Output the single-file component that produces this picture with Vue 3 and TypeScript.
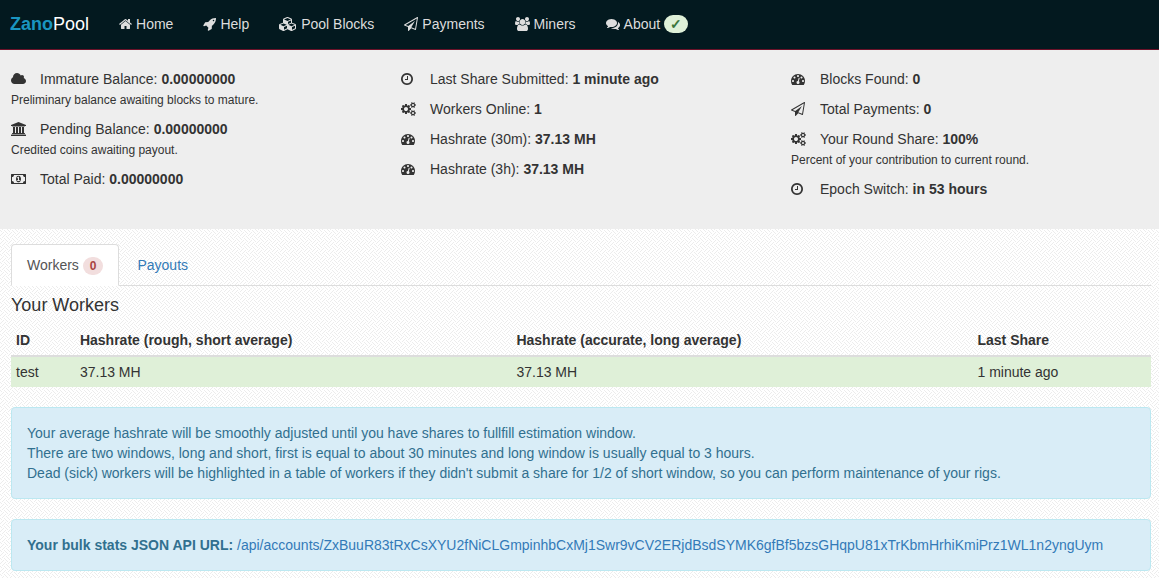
<script setup lang="ts">
interface Glyph {
  w: number
  d: string
}

interface Stat {
  icon: string
  label: string
  value: string
  note?: string
}

// Glyph outlines are drawn y-up on a 1792-unit em, 1536 units above the baseline.
const cog =
  'q0 -16 -149 -31q-12 -27 -30 -52q51 -113 51 -138q0 -4 -4 -7q-122 -71 -124 -71q-8 0 -46 47t-52 68q-20 -2 -30 -2t-30 2q-14 -21 -52 -68t-46 -47q-2 0 -124 71q-4 3 -4 7q0 25 51 138q-18 25 -30 52q-149 15 -149 31v140q0 16 149 31q13 29 30 52q-51 113 -51 138q0 4 4 7q4 2 35 20t59 34t30 16q8 0 46 -46.5t52 -67.5q20 2 30 2t30 -2q51 71 92 112l6 2q4 0 124 -70q4 -3 4 -7q0 -25 -51 -138q17 -23 30 -52q149 -15 149 -31z'
const dot = 'q0 53 -37.5 90.5t-90.5 37.5t-90.5 -37.5t-37.5 -90.5t37.5 -90.5t90.5 -37.5t90.5 37.5t37.5 90.5z'

const icons: Record<string, Glyph> = {
  home: {
    w: 1664,
    d: 'M1408 544v-480q0 -26 -19 -45t-45 -19h-384v384h-256v-384h-384q-26 0 -45 19t-19 45v480q0 1 0.5 3t0.5 3l575 474l575 -474q1 -2 1 -6zM1631 613l-62 -74q-8 -9 -21 -11h-3q-13 0 -21 7l-692 577l-692 -577q-12 -8 -24 -7q-13 2 -21 11l-62 74q-8 10 -7 23.5t11 21.5l719 599q32 26 76 26t76 -26l244 -204v195q0 14 9 23t23 9h192q14 0 23 -9t9 -23v-408l219 -182q10 -8 11 -21.5t-7 -23.5z',
  },
  rocket: {
    w: 1664,
    d: 'M1440 1088q0 40 -28 68t-68 28t-68 -28t-28 -68t28 -68t68 -28t68 28t28 68zM1664 1376q0 -249 -75.5 -430.5t-253.5 -360.5q-81 -80 -195 -176l-20 -379q-2 -16 -16 -26l-384 -224q-7 -4 -16 -4q-12 0 -23 9l-64 64q-13 14 -8 32l85 276l-281 281l-276 -85q-3 -1 -9 -1q-14 0 -23 9l-64 64q-17 19 -5 39l224 384q10 14 26 16l379 20q96 114 176 195q188 187 358 258t431 71q14 0 24 -9.5t10 -22.5z',
  },
  cubes: {
    w: 2304,
    d: 'M640 -96l384 192v314l-384 -164v-342zM576 358l404 173l-404 173l-404 -173zM1664 -96l384 192v314l-384 -164v-342zM1600 358l404 173l-404 173l-404 -173zM1152 651l384 165v266l-384 -164v-267zM1088 1030l441 189l-441 189l-441 -189zM2176 512v-416q0 -36 -19 -67t-52 -47l-448 -224q-25 -14 -57 -14t-57 14l-448 224q-5 2 -7 4q-2 -2 -7 -4l-448 -224q-25 -14 -57 -14t-57 14l-448 224q-33 16 -52 47t-19 67v416q0 38 21.5 70t56.5 48l434 186v400q0 38 21.5 70t56.5 48l448 192q23 10 50 10t50 -10l448 -192q35 -16 56.5 -48t21.5 -70v-400l434 -186q36 -16 57 -48t21 -70z',
  },
  plane: {
    w: 1792,
    d: 'M1764 1525q33 -24 27 -64l-256 -1536q-5 -29 -32 -45q-14 -8 -31 -8q-11 0 -24 5l-527 215l-298 -327q-18 -21 -47 -21q-14 0 -23 4q-19 7 -30 23.5t-11 36.5v452l-472 193q-37 14 -40 55q-3 39 32 59l1664 960q35 21 68 -2zM1422 26l221 1323l-1434 -827l336 -137l863 639l-478 -797z',
  },
  users: {
    w: 1920,
    d: 'M593 640q-162 -5 -265 -128h-134q-82 0 -138 40.5t-56 118.5q0 353 124 353q6 0 43.5 -21t97.5 -42.5t119 -21.5q67 0 133 23q-5 -37 -5 -66q0 -139 81 -256zM1664 3q0 -120 -73 -189.5t-194 -69.5h-874q-121 0 -194 69.5t-73 189.5q0 53 3.5 103.5t14 109t26.5 108.5t43 97.5t62 81t85.5 53.5t111.5 20q10 0 43 -21.5t73 -48t107 -48t135 -21.5t135 21.5t107 48t73 48t43 21.5q61 0 111.5 -20t85.5 -53.5t62 -81t43 -97.5t26.5 -108.5t14 -109t3.5 -103.5zM640 1280q0 -106 -75 -181t-181 -75t-181 75t-75 181t75 181t181 75t181 -75t75 -181zM1344 896q0 -159 -112.5 -271.5t-271.5 -112.5t-271.5 112.5t-112.5 271.5t112.5 271.5t271.5 112.5t271.5 -112.5t112.5 -271.5zM1920 671q0 -78 -56 -118.5t-138 -40.5h-134q-103 123 -265 128q81 117 81 256q0 29 -5 66q66 -23 133 -23q59 0 119 21.5t97.5 42.5t43.5 21q124 0 124 -353zM1792 1280q0 -106 -75 -181t-181 -75t-181 75t-75 181t75 181t181 75t181 -75t75 -181z',
  },
  comments: {
    w: 1792,
    d: 'M1408 768q0 -139 -94 -257t-256.5 -186.5t-353.5 -68.5q-86 0 -176 16q-124 -88 -278 -128q-36 -9 -86 -16h-3q-11 0 -20.5 8t-11.5 21q-1 3 -1 6.5t0.5 6.5t2 6l2.5 5t3.5 5.5t4 5t4.5 5t4 4.5q5 6 23 25t26 29.5t22.5 29t25 38.5t20.5 44q-124 72 -195 177t-71 224q0 139 94 257t256.5 186.5t353.5 68.5t353.5 -68.5t256.5 -186.5t94 -257zM1792 512q0 -120 -71 -224.5t-195 -176.5q10 -24 20.5 -44t25 -38.5t22.5 -29t26 -29.5t23 -25q1 -1 4 -4.5t4.5 -5t4 -5t3.5 -5.5l2.5 -5t2 -6t0.5 -6.5t-1 -6.5q-3 -14 -13 -22t-22 -7q-50 7 -86 16q-154 40 -278 128q-90 -16 -176 -16q-271 0 -472 132q58 -4 88 -4q161 0 309 45t264 129q125 92 192 212t67 254q0 77 -23 152q129 -71 204 -178t75 -230z',
  },
  cloud: {
    w: 1920,
    d: 'M1920 384q0 -159 -112.5 -271.5t-271.5 -112.5h-1088q-185 0 -316.5 131.5t-131.5 316.5q0 132 71 241.5t187 163.5q-2 28 -2 43q0 212 150 362t362 150q158 0 286.5 -88t187.5 -230q70 62 166 62q106 0 181 -75t75 -181q0 -75 -41 -138q129 -30 213 -134.5t84 -239.5z',
  },
  bank: {
    w: 1920,
    d: 'M960 1536l960 -384v-128h-128q0 -26 -20.5 -45t-48.5 -19h-1526q-28 0 -48.5 19t-20.5 45h-128v128zM256 896h256v-768h128v768h256v-768h128v768h256v-768h128v768h256v-768h59q28 0 48.5 -19t20.5 -45v-64h-1664v64q0 26 20.5 45t48.5 19h59v768zM1851 -64q28 0 48.5 -19t20.5 -45v-128h-1920v128q0 26 20.5 45t48.5 19h1782z',
  },
  money: {
    w: 1920,
    d: 'M768 384h384v96h-128v448h-114l-148 -137l77 -80q42 37 55 57h2v-288h-128v-96zM1280 640q0 -70 -21 -142t-59.5 -134t-101.5 -101t-138 -39t-138 39t-101.5 101t-59.5 134t-21 142t21 142t59.5 134t101.5 101t138 39t138 -39t101.5 -101t59.5 -134t21 -142zM1792 384v512q-106 0 -181 75t-75 181h-1152q0 -106 -75 -181t-181 -75v-512q106 0 181 -75t75 -181h1152q0 106 75 181t181 75zM1920 1216v-1152q0 -26 -19 -45t-45 -19h-1792q-26 0 -45 19t-19 45v1152q0 26 19 45t45 19h1792q26 0 45 -19t19 -45z',
  },
  clock: {
    w: 1536,
    d: 'M896 992v-448q0 -14 -9 -23t-23 -9h-320q-14 0 -23 9t-9 23v64q0 14 9 23t23 9h224v352q0 14 9 23t23 9h64q14 0 23 -9t9 -23zM1312 640q0 148 -73 273t-198 198t-273 73t-273 -73t-198 -198t-73 -273t73 -273t198 -198t273 -73t273 73t198 198t73 273zM1536 640q0 -209 -103 -385.5t-279.5 -279.5t-385.5 -103t-385.5 103t-279.5 279.5t-103 385.5t103 385.5t279.5 279.5t385.5 103t385.5 -103t279.5 -279.5t103 -385.5z',
  },
  cogs: {
    w: 1920,
    d:
      'M896 640q0 106 -75 181t-181 75t-181 -75t-75 -181t75 -181t181 -75t181 75t75 181zM1664 128q0 52 -38 90t-90 38t-90 -38t-38 -90q0 -53 37.5 -90.5t90.5 -37.5t90.5 37.5t37.5 90.5zM1664 1152q0 52 -38 90t-90 38t-90 -38t-38 -90q0 -53 37.5 -90.5t90.5 -37.5t90.5 37.5t37.5 90.5zM1280 731v-185q0 -10 -7 -19.5t-16 -10.5l-155 -24q-11 -35 -32 -76q34 -48 90 -115q7 -11 7 -20q0 -12 -7 -19q-23 -30 -82.5 -89.5t-78.5 -59.5q-11 0 -21 7l-115 90q-37 -19 -77 -31q-11 -108 -23 -155q-7 -24 -30 -24h-186q-11 0 -20 7.5t-10 17.5l-23 153q-34 10 -75 31l-118 -89q-7 -7 -20 -7q-11 0 -21 8q-144 133 -144 160q0 9 7 19q10 14 41 53t47 61q-23 44 -35 82l-152 24q-10 1 -17 9.5t-7 19.5v185q0 10 7 19.5t16 10.5l155 24q11 35 32 76q-34 48 -90 115q-7 11 -7 20q0 12 7 20q22 30 82 89t79 59q11 0 21 -7l115 -90q34 18 77 32q11 108 23 154q7 24 30 24h186q11 0 20 -7.5t10 -17.5l23 -153q34 -10 75 -31l118 89q8 7 20 7q11 0 21 -8q144 -133 144 -160q0 -8 -7 -19q-12 -16 -42 -54t-45 -60q23 -48 34 -82l152 -23q10 -2 17 -10.5t7 -19.5zM1920 198v-140' +
      cog +
      'M1920 1222v-140' +
      cog,
  },
  gauge: {
    w: 1792,
    d:
      'M384 384' + dot + 'M576 832' + dot +
      'M1004 351l101 382q6 26 -7.5 48.5t-38.5 29.5t-48 -6.5t-30 -39.5l-101 -382q-60 -5 -107 -43.5t-63 -98.5q-20 -77 20 -146t117 -89t146 20t89 117q16 60 -6 117t-72 91z' +
      'M1664 384' + dot + 'M1024 1024' + dot + 'M1472 832' + dot +
      'M1792 384q0 -261 -141 -483q-19 -29 -54 -29h-1402q-35 0 -54 29q-141 221 -141 483q0 182 71 348t191 286t286 191t348 71t348 -71t286 -191t191 -286t71 -348z',
  },
}

const iconWidth = (name: string): number => Math.round(icons[name].w / 128)

const nav: { icon: string; label: string; badge?: string }[] = [
  { icon: 'home', label: 'Home' },
  { icon: 'rocket', label: 'Help' },
  { icon: 'cubes', label: 'Pool Blocks' },
  { icon: 'plane', label: 'Payments' },
  { icon: 'users', label: 'Miners' },
  { icon: 'comments', label: 'About', badge: '✓' },
]

const stats: Stat[][] = [
  [
    { icon: 'cloud', label: 'Immature Balance:', value: '0.00000000', note: 'Preliminary balance awaiting blocks to mature.' },
    { icon: 'bank', label: 'Pending Balance:', value: '0.00000000', note: 'Credited coins awaiting payout.' },
    { icon: 'money', label: 'Total Paid:', value: '0.00000000' },
  ],
  [
    { icon: 'clock', label: 'Last Share Submitted:', value: '1 minute ago' },
    { icon: 'cogs', label: 'Workers Online:', value: '1' },
    { icon: 'gauge', label: 'Hashrate (30m):', value: '37.13 MH' },
    { icon: 'gauge', label: 'Hashrate (3h):', value: '37.13 MH' },
  ],
  [
    { icon: 'gauge', label: 'Blocks Found:', value: '0' },
    { icon: 'plane', label: 'Total Payments:', value: '0' },
    { icon: 'cogs', label: 'Your Round Share:', value: '100%', note: 'Percent of your contribution to current round.' },
    { icon: 'clock', label: 'Epoch Switch:', value: 'in 53 hours' },
  ],
]

const workers = [{ id: 'test', rough: '37.13 MH', accurate: '37.13 MH', last: '1 minute ago' }]

const apiUrl =
  '/api/accounts/ZxBuuR83tRxCsXYU2fNiCLGmpinhbCxMj1Swr9vCV2ERjdBsdSYMK6gfBf5bzsGHqpU81xTrKbmHrhiKmiPrz1WL1n2yngUym'
</script>

<template>
  <div class="page">
    <header class="navbar">
      <a class="brand" href="#"><b>Zano</b>Pool</a>
      <nav class="links">
        <a v-for="item in nav" :key="item.label" href="#">
          <svg
            class="icon"
            :width="iconWidth(item.icon)"
            height="14"
            :viewBox="`0 0 ${icons[item.icon].w} 1792`"
            aria-hidden="true"
          >
            <path transform="translate(0 1536) scale(1 -1)" :d="icons[item.icon].d" />
          </svg>
          <span>{{ item.label }}</span>
          <span v-if="item.badge" class="badge ok">{{ item.badge }}</span>
        </a>
      </nav>
    </header>

    <section class="stats">
      <div v-for="(column, c) in stats" :key="c" class="column">
        <div v-for="stat in column" :key="stat.label" class="stat">
          <div class="line">
            <span class="slot">
              <svg
                class="icon"
                :width="iconWidth(stat.icon)"
                height="14"
                :viewBox="`0 0 ${icons[stat.icon].w} 1792`"
                aria-hidden="true"
              >
                <path transform="translate(0 1536) scale(1 -1)" :d="icons[stat.icon].d" />
              </svg>
            </span>
            <span>{{ stat.label }} <b>{{ stat.value }}</b></span>
          </div>
          <small v-if="stat.note">{{ stat.note }}</small>
        </div>
      </div>
    </section>

    <main class="content">
      <nav class="tabs">
        <a class="tab active" href="#" aria-current="page">Workers <span class="badge bad">0</span></a>
        <a class="tab" href="#">Payouts</a>
      </nav>

      <h4>Your Workers</h4>
      <table>
        <thead>
          <tr>
            <th>ID</th>
            <th>Hashrate (rough, short average)</th>
            <th>Hashrate (accurate, long average)</th>
            <th>Last Share</th>
          </tr>
        </thead>
        <tbody>
          <tr v-for="w in workers" :key="w.id">
            <td>{{ w.id }}</td>
            <td>{{ w.rough }}</td>
            <td>{{ w.accurate }}</td>
            <td>{{ w.last }}</td>
          </tr>
        </tbody>
      </table>

      <div class="alert">
        Your average hashrate will be smoothly adjusted until you have shares to fullfill estimation window.<br />
        There are two windows, long and short, first is equal to about 30 minutes and long window is usually equal to 3
        hours.<br />
        Dead (sick) workers will be highlighted in a table of workers if they didn't submit a share for 1/2 of short
        window, so you can perform maintenance of your rigs.
      </div>
      <div class="alert">
        <b>Your bulk stats JSON API URL:</b> <a href="#">{{ apiUrl }}</a>
      </div>
    </main>
  </div>
</template>

<style>
body {
  background: #fff
    url("data:image/svg+xml,%3Csvg xmlns='http://www.w3.org/2000/svg' width='8' height='8' shape-rendering='crispEdges'%3E%3Cpath fill='%23ececec' d='M0 3h1v1h-1zM1 2h1v1h-1zM2 1h1v1h-1zM3 0h1v1h-1zM2 5h1v1h-1zM3 4h1v1h-1zM4 3h1v1h-1zM5 2h1v1h-1zM4 6h1v1h-1zM5 7h1v1h-1zM6 0h1v1h-1zM7 1h1v1h-1zM6 4h1v1h-1zM7 5h1v1h-1zM0 6h1v1h-1zM1 7h1v1h-1z'/%3E%3C/svg%3E");
}
</style>

<style scoped>
.page {
  color: #333;
  font: 14px/20px "Liberation Sans", Arial, sans-serif;
}

.page *,
.page {
  box-sizing: border-box;
}

a {
  color: #337ab7;
  text-decoration: none;
}

.icon {
  display: block;
  flex: none;
  fill: currentColor;
}

.navbar {
  display: flex;
  align-items: center;
  height: 50px;
  padding: 0 8px 1px 10px;
  background: #03191f;
  border-bottom: 1px solid #6b1229;
}

.brand {
  padding-right: 15px;
  color: #fff;
  font-size: 18px;
}

.brand b {
  color: #1a95c0;
}

.links {
  display: flex;
}

.links a {
  display: flex;
  align-items: center;
  gap: 4px;
  padding: 14px 15px;
  color: #ddd;
}

.badge {
  display: inline-block;
  min-width: 10px;
  padding: 3px 7px;
  border-radius: 10px;
  font-size: 12px;
  font-weight: bold;
  line-height: 12px;
  text-align: center;
  vertical-align: middle;
}

.links .ok {
  padding: 3px 6px;
  background: #dff0d8;
  color: #3c763d;
  font-size: 14px;
}

.bad {
  background: #f2dede;
  color: #a94442;
}

.stats {
  display: grid;
  grid-template-columns: repeat(3, 1fr);
  gap: 30px;
  padding: 19px 8px 30px 11px;
  background: #eee;
}

.stat {
  margin-bottom: 10px;
}

.column .stat:last-child {
  margin-bottom: 0;
}

.line {
  display: flex;
  align-items: center;
}

.slot {
  width: 29px;
}

small {
  display: block;
  padding-top: 2px;
  font-size: 12px;
  line-height: 18px;
}

.content {
  padding: 15px 8px 0 11px;
}

.tabs {
  display: flex;
  border-bottom: 1px solid #ddd;
}

.tab {
  margin: 0 2px -1px 0;
  padding: 10px 15px;
  border: 1px solid transparent;
  border-radius: 4px 4px 0 0;
}

.active {
  background: #fff;
  border-color: #ddd #ddd #fff;
  color: #555;
}

h4 {
  margin: 10px 0;
  font-size: 18px;
  font-weight: 500;
  line-height: 19px;
}

table {
  width: 100%;
  margin-bottom: 20px;
  border-collapse: separate;
  border-spacing: 0;
}

th,
td {
  padding: 5px;
  text-align: left;
}

th {
  border-bottom: 2px solid #ddd;
}

td {
  background: #dff0d8;
}

.alert {
  margin-bottom: 20px;
  padding: 15px;
  background: #d9edf7;
  border: 1px solid #bce8f1;
  border-radius: 4px;
  color: #31708f;
}
</style>
